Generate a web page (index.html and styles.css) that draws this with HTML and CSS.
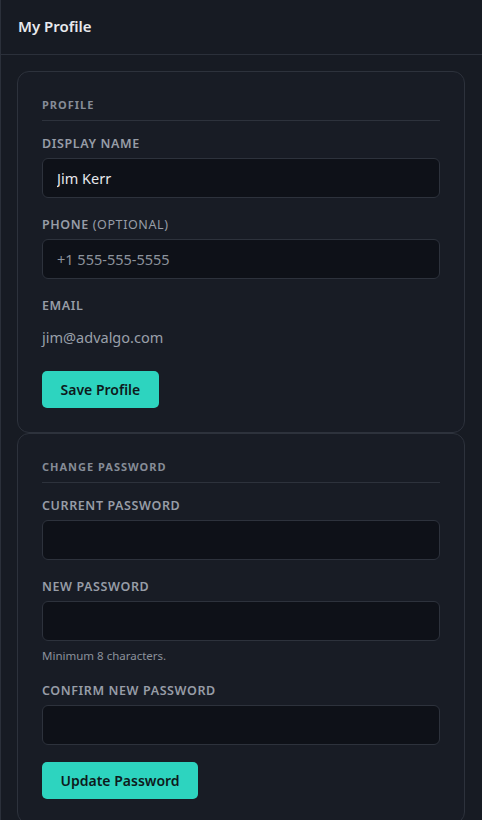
FILE: index.html
```html
<!DOCTYPE html>
<html lang="en">
<head>
  <meta charset="UTF-8"/>
  <meta name="viewport" content="width=device-width, initial-scale=1.0"/>
  <title>My Profile</title>
  <link rel="stylesheet" href="styles.css">
</head>
<body>

  <div class="panel">
    <!-- Header -->
    <div class="header">My Profile</div>

    <div class="content">
      <!-- Profile card -->
      <div class="card">
        <div class="card-title">Profile</div>

        <div class="field">
          <label class="label" for="displayName">Display Name</label>
          <input type="text" id="displayName" class="input" value="Jim Kerr"/>
        </div>

        <div class="field">
          <label class="label" for="phone">Phone <span class="label-note">(optional)</span></label>
          <input type="text" id="phone" class="input" placeholder="+1 555-555-5555"/>
        </div>

        <div class="field">
          <div class="label">Email</div>
          <div class="static-value">jim@advalgo.com</div>
        </div>

        <button class="btn">Save Profile</button>
      </div>

      <!-- Password card -->
      <div class="card">
        <div class="card-title">Change Password</div>

        <div class="field">
          <label class="label" for="currentPw">Current Password</label>
          <input type="password" id="currentPw" class="input"/>
        </div>

        <div class="field">
          <label class="label" for="newPw">New Password</label>
          <input type="password" id="newPw" class="input"/>
          <div class="hint">Minimum 8 characters.</div>
        </div>

        <div class="field field-last">
          <label class="label" for="confirmPw">Confirm New Password</label>
          <input type="password" id="confirmPw" class="input"/>
        </div>

        <button class="btn">Update Password</button>
      </div>
    </div>
  </div>

</body>
</html>
```

FILE: styles.css
```css
body {
  margin: 0;
  background-color: #171b23;
  font-family: "Noto Sans", "Open Sans", sans-serif;
  color: #e6e8ec;
}

.panel {
  min-height: 820px;
  border-left: 1px solid #2b303a;
}

.header {
  height: 54px;
  line-height: 53px;
  padding: 0 17px;
  font-size: 15px;
  font-weight: 600;
  color: #e8eaee;
  border-bottom: 1px solid #2b303a;
}

.content {
  padding: 16px 17px 0 16px;
}

.card {
  background-color: #181c25;
  border: 1px solid #2d323c;
  border-radius: 12px;
  padding: 24px;
}

.card-title {
  font-size: 11px;
  line-height: 17px;
  font-weight: 700;
  letter-spacing: 1px;
  text-transform: uppercase;
  color: #868c97;
  padding-bottom: 7px;
  border-bottom: 1px solid #2d323c;
  margin-bottom: 14px;
}

.field {
  margin-bottom: 18px;
}

.field-last {
  margin-bottom: 17px;
}

.label {
  display: block;
  font-size: 12.5px;
  line-height: 18px;
  font-weight: 600;
  letter-spacing: 0.6px;
  text-transform: uppercase;
  color: #979da7;
  margin-bottom: 5px;
}

.label-note {
  font-weight: 400;
}

.input {
  display: block;
  box-sizing: border-box;
  width: 100%;
  height: 40px;
  padding: 0 14px;
  background-color: #0e1118;
  border: 1px solid #2d323c;
  border-radius: 6px;
  font-family: inherit;
  font-size: 14.5px;
  color: #e6e8ec;
  outline: none;
}

.input::placeholder {
  color: #8d939d;
}

.static-value {
  font-size: 14.5px;
  line-height: 22px;
  padding: 6px 0 5px 0;
  color: #9aa0aa;
}

.hint {
  font-size: 11.5px;
  line-height: 17px;
  margin-top: 6px;
  color: #8b919b;
}

.btn {
  display: block;
  height: 37px;
  padding: 0 18.5px;
  background-color: #2dd4bf;
  border: none;
  border-radius: 5px;
  font-family: inherit;
  font-size: 14px;
  font-weight: 600;
  color: #0d1a1c;
  cursor: pointer;
}
```
